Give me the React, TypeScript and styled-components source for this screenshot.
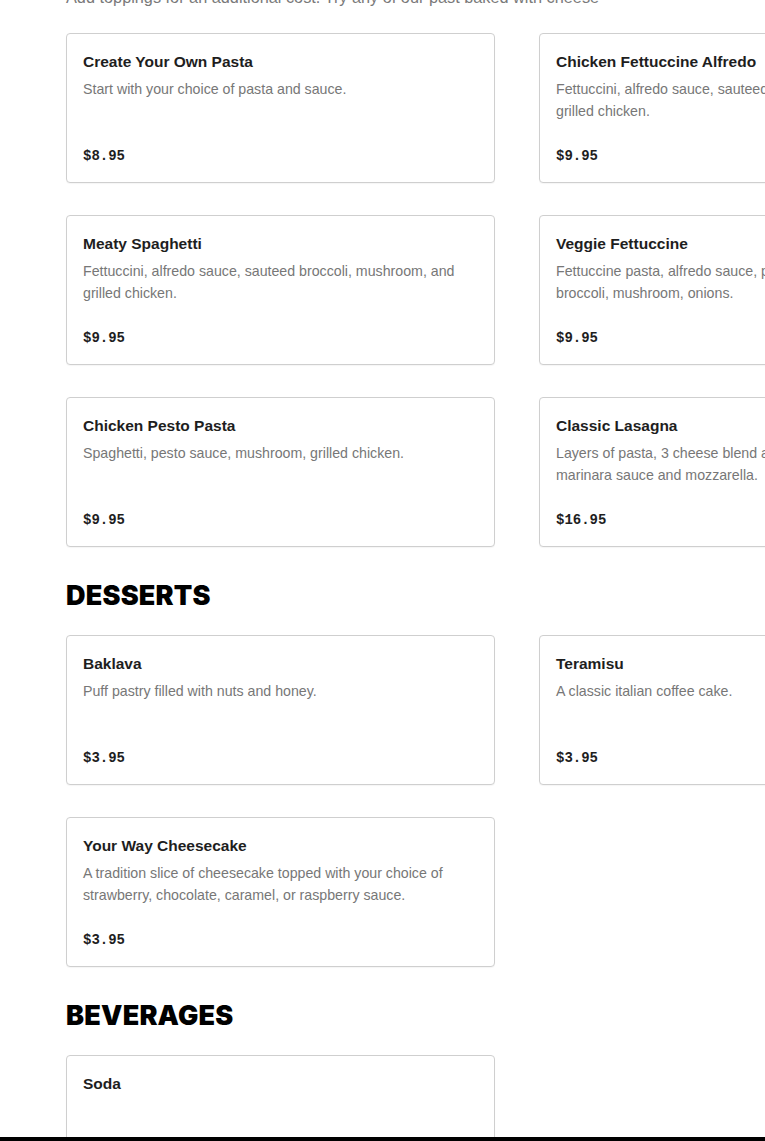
import { FC } from "react";
import styled, { createGlobalStyle } from "styled-components";

const GlobalStyle = createGlobalStyle`
  body {
    margin: 0;
    background: #ffffff;
    font-family: "Liberation Sans", Arial, sans-serif;
    overflow: hidden;
  }
`;

interface MenuItem {
  name: string;
  description?: string;
  price?: string;
}

interface MenuSection {
  title?: string;
  intro?: string;
  items: MenuItem[];
}

const sections: MenuSection[] = [
  {
    intro:
      "Add toppings for an additional cost. Try any of our past baked with cheese",
    items: [
      {
        name: "Create Your Own Pasta",
        description: "Start with your choice of pasta and sauce.",
        price: "$8.95",
      },
      {
        name: "Chicken Fettuccine Alfredo",
        description:
          "Fettuccini, alfredo sauce, sauteed broccoli, mushroom, and grilled chicken.",
        price: "$9.95",
      },
      {
        name: "Meaty Spaghetti",
        description:
          "Fettuccini, alfredo sauce, sauteed broccoli, mushroom, and grilled chicken.",
        price: "$9.95",
      },
      {
        name: "Veggie Fettuccine",
        description:
          "Fettuccine pasta, alfredo sauce, peppers, spinach, tomatoes, broccoli, mushroom, onions.",
        price: "$9.95",
      },
      {
        name: "Chicken Pesto Pasta",
        description: "Spaghetti, pesto sauce, mushroom, grilled chicken.",
        price: "$9.95",
      },
      {
        name: "Classic Lasagna",
        description:
          "Layers of pasta, 3 cheese blend and seasoned ground beef, marinara sauce and mozzarella.",
        price: "$16.95",
      },
    ],
  },
  {
    title: "DESSERTS",
    items: [
      {
        name: "Baklava",
        description: "Puff pastry filled with nuts and honey.",
        price: "$3.95",
      },
      {
        name: "Teramisu",
        description: "A classic italian coffee cake.",
        price: "$3.95",
      },
      {
        name: "Your Way Cheesecake",
        description:
          "A tradition slice of cheesecake topped with your choice of strawberry, chocolate, caramel, or raspberry sauce.",
        price: "$3.95",
      },
    ],
  },
  {
    title: "BEVERAGES",
    items: [{ name: "Soda" }],
  },
];

const Page = styled.main`
  margin-top: -14px;
  padding: 0 0 0 66px;
  width: 902px;
`;

const Section = styled.section`
  display: flex;
  flex-direction: column;
`;

const SectionTitle = styled.h2`
  margin: 33px 0 23px;
  font-family: Inter, "Liberation Sans", sans-serif;
  font-weight: 900;
  font-size: 27px;
  line-height: 32px;
  letter-spacing: 0.2px;
  color: #000000;
`;

const Intro = styled.p`
  margin: 0 0 25px;
  font-size: 16.3px;
  line-height: 22px;
  color: #7a7a7a;
`;

const Grid = styled.div`
  display: grid;
  grid-template-columns: 429px 429px;
  column-gap: 44px;
  row-gap: 32px;
`;

const Card = styled.article`
  box-sizing: border-box;
  min-height: 150px;
  padding: 17px 16px 15px;
  border: 1px solid #cfcfcf;
  border-radius: 4px;
  background: #ffffff;
  box-shadow: 0 1px 1px rgba(0, 0, 0, 0.04);
  display: flex;
  flex-direction: column;
`;

const ItemName = styled.h3`
  margin: 0;
  font-size: 15.5px;
  line-height: 22px;
  font-weight: 700;
  color: #1e1e1e;
`;

const ItemDescription = styled.p`
  margin: 5px 0 0;
  min-height: 44px;
  font-size: 14.2px;
  line-height: 22px;
  color: #777777;
`;

const Price = styled.span`
  margin-top: 23px;
  font-family: "Liberation Mono", "DejaVu Sans Mono", monospace;
  font-weight: 700;
  font-size: 14px;
  line-height: 22px;
  color: #1e1e1e;
`;

const BottomBar = styled.div`
  position: fixed;
  left: 0;
  right: 0;
  bottom: 0;
  height: 4px;
  background: #000000;
`;

const ItemCard: FC<{ item: MenuItem }> = ({ item }) => (
  <Card>
    <ItemName>{item.name}</ItemName>
    <ItemDescription>{item.description}</ItemDescription>
    {item.price && <Price>{item.price}</Price>}
  </Card>
);

export default function App() {
  return (
    <>
      <GlobalStyle />
      <Page>
        {sections.map((section, i) => (
          <Section key={i}>
            {section.title && <SectionTitle>{section.title}</SectionTitle>}
            {section.intro && <Intro>{section.intro}</Intro>}
            <Grid>
              {section.items.map((item) => (
                <ItemCard key={item.name} item={item} />
              ))}
            </Grid>
          </Section>
        ))}
      </Page>
      <BottomBar />
    </>
  );
}
